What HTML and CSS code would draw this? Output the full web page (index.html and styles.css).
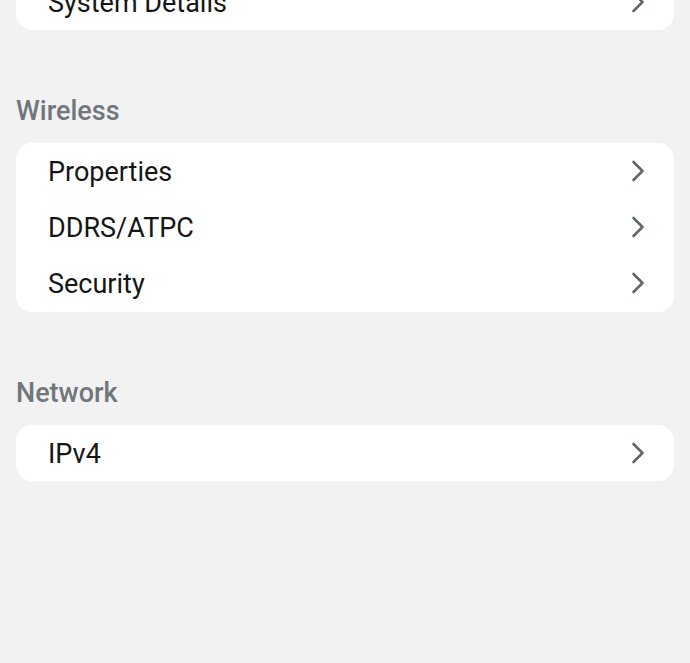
FILE: index.html
```html
<!DOCTYPE html>
<html lang="en">
<head>
    <meta charset="UTF-8">
    <meta name="viewport" content="width=device-width, initial-scale=1.0">
    <title>Settings</title>
    <link rel="stylesheet" href="styles.css">
</head>
<body>
    <div class="page">
        <div class="card card-top">
            <div class="row">
                <span>System Details</span>
                <svg class="chevron" viewBox="0 0 14 22"><path d="M2.5 2 L11.5 11 L2.5 20"/></svg>
            </div>
        </div>

        <h3 class="section-title">Wireless</h3>
        <div class="card card-multi">
            <div class="row">
                <span>Properties</span>
                <svg class="chevron" viewBox="0 0 14 22"><path d="M2.5 2 L11.5 11 L2.5 20"/></svg>
            </div>
            <div class="row">
                <span>DDRS/ATPC</span>
                <svg class="chevron" viewBox="0 0 14 22"><path d="M2.5 2 L11.5 11 L2.5 20"/></svg>
            </div>
            <div class="row">
                <span>Security</span>
                <svg class="chevron" viewBox="0 0 14 22"><path d="M2.5 2 L11.5 11 L2.5 20"/></svg>
            </div>
        </div>

        <h3 class="section-title">Network</h3>
        <div class="card">
            <div class="row">
                <span>IPv4</span>
                <svg class="chevron" viewBox="0 0 14 22"><path d="M2.5 2 L11.5 11 L2.5 20"/></svg>
            </div>
        </div>
    </div>
</body>
</html>
```

FILE: styles.css
```css
body {
    margin: 0;
    background-color: #f2f2f2;
    font-family: Roboto, "Noto Sans", sans-serif;
}
.page {
    padding: 0 16px;
}
.card {
    background: white;
    border-radius: 16px;
}
.card-top {
    margin-top: -26px;
    border-radius: 0 0 16px 16px;
}
.card-multi {
    padding-bottom: 1px;
}
.row {
    display: flex;
    align-items: center;
    justify-content: space-between;
    height: 56px;
    padding: 0 29px 0 32px;
    font-size: 27px;
    color: #161616;
}
.row span {
    margin-top: 1px;
}
.chevron {
    width: 14px;
    height: 22px;
    fill: none;
    stroke: #60676b;
    stroke-width: 2.6;
    stroke-linecap: round;
    stroke-linejoin: round;
}
.section-title {
    margin: 65px 0 16px 0;
    line-height: 32px;
    font-size: 27px;
    font-weight: 500;
    color: #70767c;
}
```
